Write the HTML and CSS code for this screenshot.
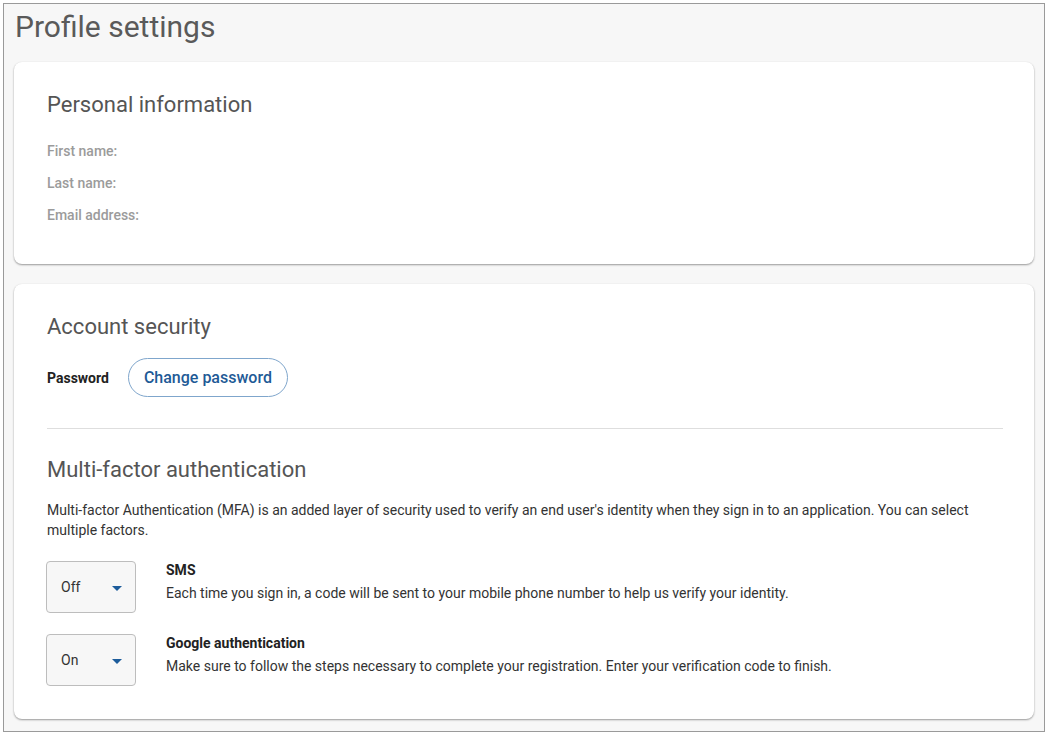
FILE: index.html
```html
<!DOCTYPE html>
<html lang="en">
<head>
<meta charset="utf-8">
<title>Profile settings</title>
<link rel="stylesheet" href="styles.css">
</head>
<body>
<div class="frame">
  <h1 class="page-title">Profile settings</h1>

  <section class="card">
    <h2 class="card-title">Personal information</h2>
    <ul class="fields">
      <li>First name:</li>
      <li>Last name:</li>
      <li>Email address:</li>
    </ul>
  </section>

  <section class="card card-security">
    <h2 class="card-title">Account security</h2>
    <div class="password-row">
      <span class="password-label">Password</span>
      <button class="btn-outline" type="button">Change password</button>
    </div>
    <hr class="divider">
    <h2 class="card-title mfa-title">Multi-factor authentication</h2>
    <p class="mfa-intro">Multi-factor Authentication (MFA) is an added layer of security used to verify an end user's identity when they sign in to an application. You can select multiple factors.</p>
    <div class="factors">
      <div class="factor">
        <div class="select">
          <span class="select-value">Off</span>
          <svg class="caret" width="10" height="5" viewBox="0 0 10 5"><path d="M0 0H10L5 5Z" fill="#1d5c9b"/></svg>
        </div>
        <div class="factor-text">
          <div class="factor-name">SMS</div>
          <div class="factor-desc">Each time you sign in, a code will be sent to your mobile phone number to help us verify your identity.</div>
        </div>
      </div>
      <div class="factor">
        <div class="select">
          <span class="select-value">On</span>
          <svg class="caret" width="10" height="5" viewBox="0 0 10 5"><path d="M0 0H10L5 5Z" fill="#1d5c9b"/></svg>
        </div>
        <div class="factor-text">
          <div class="factor-name">Google authentication</div>
          <div class="factor-desc">Make sure to follow the steps necessary to complete your registration. Enter your verification code to finish.</div>
        </div>
      </div>
    </div>
  </section>
</div>
</body>
</html>
```

FILE: styles.css
```css
* { box-sizing: border-box; }

html, body {
  margin: 0;
  padding: 0;
  background: #ffffff;
}

body {
  font-family: Roboto, "Liberation Sans", Arial, sans-serif;
  color: #333;
}

.frame {
  margin: 3px;
  width: 1042px;
  height: 729px;
  border: 1px solid #9a9a9a;
  background: #f7f7f7;
  padding: 6px 10px 0 10px;
  overflow: hidden;
}

.page-title {
  margin: 0 0 18px 1px;
  font-size: 30px;
  line-height: 34px;
  font-weight: 400;
  color: #5a5a5a;
}

.card {
  background: #fff;
  border-radius: 8px;
  box-shadow: 0 1px 2px rgba(0, 0, 0, 0.38), 0 0 1px rgba(0, 0, 0, 0.05);
  padding: 29px 31px 33px 33px;
}

.card-security {
  margin-top: 20px;
}

.card-title {
  margin: 0;
  font-size: 22px;
  line-height: 28px;
  font-weight: 400;
  color: #555;
}

.fields {
  list-style: none;
  margin: 16px 0 0 0;
  padding: 0;
}

.fields li {
  font-size: 14px;
  line-height: 32px;
  font-weight: 500;
  color: #9b9b9b;
}

.password-row {
  display: flex;
  align-items: center;
  gap: 19px;
  margin-top: 17px;
}

.password-label {
  font-size: 14px;
  font-weight: 700;
  color: #222;
}

.btn-outline {
  font-family: inherit;
  font-size: 16px;
  font-weight: 500;
  color: #1e5a96;
  background: #fff;
  border: 1px solid #7fa6cc;
  border-radius: 20px;
  height: 39px;
  padding: 0 15px;
  cursor: pointer;
}

.divider {
  margin: 31px 0 0 0;
  border: 0;
  border-top: 1px solid #dedede;
  height: 0;
}

.mfa-title {
  margin-top: 27px;
}

.mfa-intro {
  margin: 16px 0 0 0;
  font-size: 14px;
  line-height: 20px;
  color: #333;
}

.factors {
  display: flex;
  flex-direction: column;
  gap: 21px;
  margin-top: 21px;
}

.factor {
  display: flex;
  align-items: flex-start;
  gap: 30px;
  margin-left: -1px;
}

.select {
  flex: none;
  width: 90px;
  height: 52px;
  border: 1px solid #bdbdbd;
  border-radius: 4px;
  background: #f7f7f7;
  display: flex;
  align-items: center;
  justify-content: space-between;
  padding: 0 13px 0 14px;
}

.select-value {
  font-size: 14px;
  color: #333;
}

.caret {
  display: block;
  margin-top: 2px;
}

.factor-name {
  font-size: 14px;
  line-height: 20px;
  font-weight: 700;
  color: #222;
  margin-top: -1px;
}

.factor-desc {
  font-size: 14px;
  line-height: 20px;
  color: #333;
  margin-top: 3px;
}
```
